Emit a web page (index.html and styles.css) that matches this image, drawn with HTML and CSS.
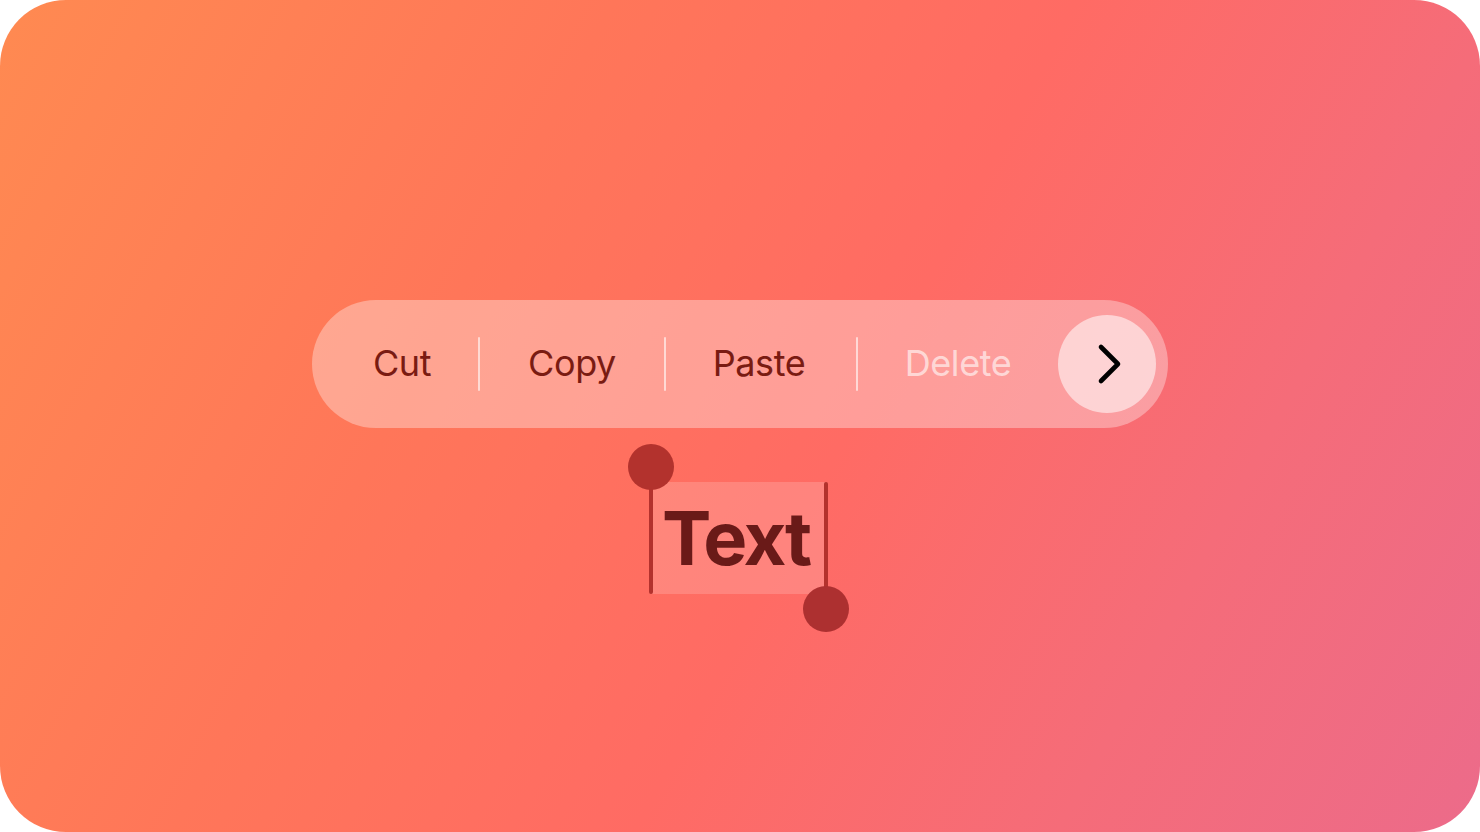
FILE: index.html
```html
<!DOCTYPE html>
<html lang="en">
  <head>
    <meta charset="UTF-8" />
    <meta name="viewport" content="width=device-width, initial-scale=1.0" />
    <title>Edit Menu</title>
    <link rel="stylesheet" href="styles.css">
  </head>

  <body>
    <div class="canvas">
      <div class="menu">
        <div class="menu__item menu__item--cut">Cut</div>
        <div class="menu__divider"></div>
        <div class="menu__item menu__item--copy">Copy</div>
        <div class="menu__divider"></div>
        <div class="menu__item menu__item--paste">Paste</div>
        <div class="menu__divider"></div>
        <div class="menu__item menu__item--disabled">Delete</div>
        <button class="menu__more">
          <svg width="26" height="42" viewBox="0 0 26 42">
            <path d="M5 4 L22 21 L5 38" fill="none" stroke="#000" stroke-width="4.6" stroke-linecap="round" stroke-linejoin="round" />
          </svg>
        </button>
      </div>

      <div class="selection">
        <div class="selection__box">Text</div>
        <span class="handle handle--start"></span>
        <span class="handle handle--end"></span>
      </div>
    </div>
  </body>
</html>
```

FILE: styles.css
```css
* {
  margin: 0;
  padding: 0;
  box-sizing: border-box;
}

body {
  background: #fff;
  font-family: Inter, "Noto Sans", sans-serif;
}

.canvas {
  width: 1480px;
  height: 832px;
  border-radius: 66px;
  background: linear-gradient(118deg, #ff8a51 0%, #ff7659 32%, #ff6b64 56%, #f56c79 78%, #ec6b8a 100%);
  display: flex;
  flex-direction: column;
  align-items: center;
  padding-top: 300px;
}

.menu {
  width: 856px;
  height: 128px;
  border-radius: 64px;
  background: rgba(255, 255, 255, 0.34);
  display: flex;
  align-items: center;
  padding-right: 12px;
}

.menu__item {
  flex: none;
  font-size: 36px;
  line-height: 40px;
  margin-top: -3px;
  color: #7a1b12;
  letter-spacing: -0.4px;
  text-align: center;
}

.menu__item--cut {
  width: 166px;
  padding-left: 14px;
}

.menu__item--copy {
  width: 184px;
}

.menu__item--paste {
  width: 190px;
  padding-right: 4px;
}

.menu__item--disabled {
  width: 200px;
  color: rgba(255, 255, 255, 0.62);
}

.menu__divider {
  flex: none;
  width: 2px;
  height: 54px;
  border-radius: 1px;
  background: rgba(255, 255, 255, 0.6);
}

.menu__more {
  flex: none;
  width: 98px;
  height: 98px;
  border-radius: 50%;
  border: none;
  background: rgba(255, 255, 255, 0.55);
  display: flex;
  align-items: center;
  justify-content: center;
  padding-left: 3px;
}

.selection {
  position: relative;
  margin-top: 54px;
  margin-left: -2px;
}

.selection__box {
  width: 174px;
  height: 112px;
  background: rgba(255, 255, 255, 0.17);
  font-size: 74px;
  font-weight: 700;
  color: #6a1a18;
  letter-spacing: -2.4px;
  line-height: 112px;
  padding-left: 10px;
}

.handle {
  position: absolute;
  width: 4px;
  border-radius: 2px;
  background: #b3322d;
}

.handle::before {
  content: "";
  position: absolute;
  left: -21px;
  width: 46px;
  height: 46px;
  border-radius: 50%;
  background: #b3322d;
}

.handle--start {
  left: -3px;
  top: -16px;
  height: 128px;
}

.handle--start::before {
  top: -22px;
}

.handle--end {
  left: 172px;
  top: 0;
  height: 126px;
}

.handle--end::before {
  bottom: -24px;
  background: #ad3030;
}
```
